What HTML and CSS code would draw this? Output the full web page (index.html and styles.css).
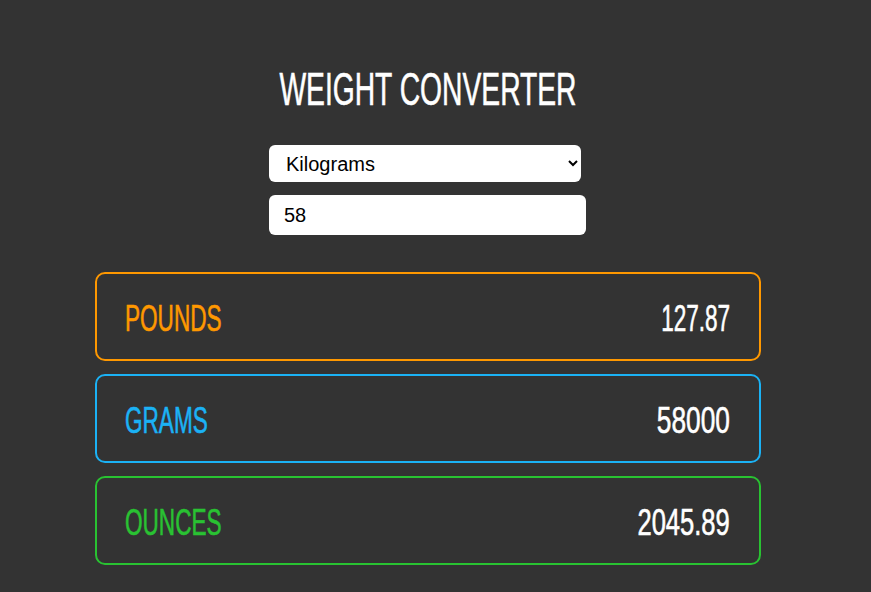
FILE: index.html
```html
<!DOCTYPE html>
<html lang="en">
<head>
<meta charset="utf-8">
<title>Weight Converter</title>
<link rel="stylesheet" href="styles.css">
</head>
<body>
<main class="app">
  <h1 class="title"><span class="cond cond-center">WEIGHT CONVERTER</span></h1>
  <form class="controls">
    <select class="unit-select">
      <option selected>Kilograms</option>
      <option>Pounds</option>
      <option>Grams</option>
      <option>Ounces</option>
    </select>
    <input class="amount" type="number" value="58">
  </form>
  <section class="results">
    <div class="card card-pounds">
      <span class="cond cond-left label">POUNDS</span>
      <span class="cond cond-right value">127.87</span>
    </div>
    <div class="card card-grams">
      <span class="cond cond-left label">GRAMS</span>
      <span class="cond cond-right value">58000</span>
    </div>
    <div class="card card-ounces">
      <span class="cond cond-left label">OUNCES</span>
      <span class="cond cond-right value">2045.89</span>
    </div>
  </section>
</main>
</body>
</html>
```
FILE: styles.css
```css
html, body {
  margin: 0;
  padding: 0;
  background: #333333;
}

body {
  font-family: "Liberation Sans", Arial, sans-serif;
  color: #ffffff;
}

.app {
  width: 856px;
  padding-top: 66px;
  display: flex;
  flex-direction: column;
  align-items: center;
}

.cond {
  display: inline-block;
  white-space: nowrap;
  transform: scaleX(0.614);
  -webkit-text-stroke: 0.6px currentColor;
}

.cond-center { transform-origin: center; }
.cond-left { transform-origin: left center; transform: scaleX(0.61); }
.cond-right { transform-origin: right center; transform: scaleX(0.61); }

.title {
  margin: 0;
  font-size: 46px;
  line-height: 46px;
  font-weight: normal;
  color: #ffffff;
  text-align: center;
}

.controls {
  margin-top: 33px;
  width: 318px;
  display: flex;
  flex-direction: column;
  align-items: flex-start;
  gap: 13px;
}

.unit-select {
  width: 312px;
  height: 37px;
  box-sizing: border-box;
  border: none;
  border-radius: 6px;
  background: #ffffff;
  color: #000000;
  font-family: "Liberation Sans", Arial, sans-serif;
  font-size: 20px;
  padding: 0 6px 0 13px;
  margin: 0;
  outline: none;
}

.amount {
  width: 317px;
  height: 40px;
  box-sizing: border-box;
  border: none;
  border-radius: 6px;
  background: #ffffff;
  color: #000000;
  font-family: "Liberation Sans", Arial, sans-serif;
  font-size: 20px;
  padding: 0 15px;
  margin: 0;
  outline: none;
  -moz-appearance: textfield;
}

.amount::-webkit-inner-spin-button,
.amount::-webkit-outer-spin-button {
  -webkit-appearance: none;
  margin: 0;
}

.results {
  margin-top: 37px;
  width: 666px;
  display: flex;
  flex-direction: column;
  gap: 13px;
}

.card {
  height: 89px;
  box-sizing: border-box;
  border: 2px solid;
  border-radius: 10px;
  padding: 4px 29px 0 28px;
  display: flex;
  align-items: center;
  justify-content: space-between;
  font-size: 37px;
  line-height: 37px;
}

.card-pounds { border-color: #ff9800; }
.card-pounds .label { color: #ff9800; }

.card-grams { border-color: #1bb2f5; }
.card-grams .label { color: #1bb2f5; }
.card-grams .value { transform: scaleX(0.71); }

.card-ounces { border-color: #29c232; }
.card-ounces .label { color: #29c232; }
.card-ounces .value { transform: scaleX(0.69); }

.value { color: #ffffff; }
```
